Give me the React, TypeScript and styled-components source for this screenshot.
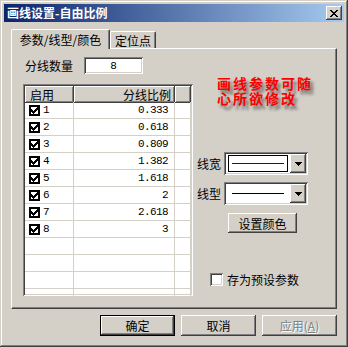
import React from "react";
import styled, { createGlobalStyle } from "styled-components";

const GlobalStyle = createGlobalStyle`
  html, body { margin: 0; padding: 0; background: #d4d0c8; }
  body {
    font-family: "Noto Sans CJK SC", "Liberation Sans", sans-serif;
    font-size: 12px;
    color: #000;
  }
`;

const raised = `
  background: #d4d0c8;
  box-shadow: inset -1px -1px #404040, inset 1px 1px #ffffff, inset -2px -2px #808080, inset 2px 2px #d4d0c8;
`;

const sunken = `
  box-shadow: inset 1px 1px #808080, inset -1px -1px #ffffff, inset 2px 2px #404040, inset -2px -2px #d4d0c8;
`;

const Window = styled.div`
  width: 348px;
  height: 347px;
  box-sizing: border-box;
  padding: 4px;
  background: #d4d0c8;
  box-shadow: inset -1px -1px #404040, inset 1px 1px #d4d0c8, inset -2px -2px #808080, inset 2px 2px #ffffff;
  display: flex;
  flex-direction: column;
`;

const TitleBar = styled.div`
  height: 18px;
  flex-shrink: 0;
  display: flex;
  align-items: center;
  justify-content: space-between;
  padding: 0 2px 0 3px;
  background: linear-gradient(to right, #0a246a, #a6caf0);
`;

const Title = styled.span`
  color: #fff;
  font-weight: bold;
  font-size: 12px;
  line-height: 18px;
`;

const CloseBtn = styled.div`
  ${raised}
  width: 16px;
  height: 14px;
  display: flex;
  align-items: center;
  justify-content: center;
`;

const Body = styled.div`
  flex: 1;
  display: flex;
  flex-direction: column;
  padding: 9px 7px 7px 7px;
`;

const TabRow = styled.div`
  height: 17px;
  display: flex;
  align-items: flex-end;
  position: relative;
  z-index: 1;
`;

const Tab = styled.div<{ $active?: boolean; $w: number }>`
  width: ${(p) => p.$w}px;
  height: ${(p) => (p.$active ? 20 : 17)}px;
  margin-bottom: ${(p) => (p.$active ? -1 : 0)}px;
  box-sizing: border-box;
  background: #d4d0c8;
  border-top: 1px solid #fff;
  border-left: 1px solid #fff;
  border-right: 1px solid #404040;
  border-radius: 2px 2px 0 0;
  box-shadow: inset -1px 0 #808080;
  display: flex;
  align-items: center;
  justify-content: center;
  font-size: 12px;
`;

const Panel = styled.div`
  height: 261px;
  box-sizing: border-box;
  border-top: 1px solid #fff;
  border-left: 1px solid #fff;
  border-right: 1px solid #404040;
  border-bottom: 1px solid #404040;
  box-shadow: inset -1px -1px #808080;
  padding: 8px 0 0 11px;
  display: flex;
`;

const LeftCol = styled.div`
  width: 170px;
  display: flex;
  flex-direction: column;
`;

const CountRow = styled.div`
  height: 17px;
  display: flex;
  align-items: center;
  padding-left: 2px;
`;

const Label = styled.span`
  font-size: 12px;
  white-space: nowrap;
`;

const CountInput = styled.div`
  ${sunken}
  background: #fff;
  width: 59px;
  height: 17px;
  margin-left: 11px;
  display: flex;
  align-items: center;
  justify-content: center;
  font-family: "Liberation Mono", monospace;
  font-size: 11px;
`;

const List = styled.div`
  ${sunken}
  background: #fff;
  margin-top: 10px;
  width: 170px;
  height: 212px;
  box-sizing: border-box;
  padding: 2px;
  overflow: hidden;
`;

const Grid = styled.div<{ $h: number }>`
  display: grid;
  grid-template-columns: 49px 101px 16px;
  height: ${(p) => p.$h}px;
`;

const HeadCell = styled.div<{ $right?: boolean }>`
  ${raised}
  display: flex;
  align-items: center;
  justify-content: ${(p) => (p.$right ? "flex-end" : "flex-start")};
  padding: ${(p) => (p.$right ? "0 4px 0 0" : "0 0 0 5px")};
  font-size: 12px;
`;

const Cell = styled.div<{ $right?: boolean }>`
  box-sizing: border-box;
  border-right: 1px solid #d4d0c8;
  border-bottom: 1px solid #d4d0c8;
  display: flex;
  align-items: center;
  justify-content: ${(p) => (p.$right ? "flex-end" : "flex-start")};
  padding: ${(p) => (p.$right ? "0 6px 0 0" : "0 0 0 4px")};
  font-family: "Liberation Mono", monospace;
  font-size: 11px;
  letter-spacing: -0.6px;
`;

const RowNum = styled.span`
  margin-left: 3px;
`;

const RightCol = styled.div`
  flex: 1;
  display: flex;
  flex-direction: column;
  padding-left: 4px;
`;

const Note = styled.div`
  margin-top: 19px;
  padding-left: 20px;
  color: #ff0000;
  font-weight: bold;
  font-size: 14px;
  line-height: 15px;
  letter-spacing: 2px;
  text-shadow: 3px 4px 3px rgba(0, 0, 0, 0.45);
`;

const FieldRow = styled.div<{ $top: number }>`
  margin-top: ${(p) => p.$top}px;
  height: 23px;
  display: flex;
  align-items: center;
`;

const Combo = styled.div`
  ${sunken}
  background: #fff;
  margin-left: 3px;
  width: 84px;
  height: 23px;
  box-sizing: border-box;
  padding: 2px;
  display: flex;
`;

const FieldArea = styled.div`
  flex: 1;
  padding: 1px 2px;
  display: flex;
`;

const FieldBox = styled.div<{ $boxed?: boolean }>`
  flex: 1;
  border: 1px solid ${(p) => (p.$boxed ? "#000" : "transparent")};
  display: flex;
  align-items: center;
  padding: 0 3px;
`;

const Stroke = styled.div<{ $color: string }>`
  flex: 1;
  height: 1px;
  background: ${(p) => p.$color};
`;

const DropBtn = styled.div`
  ${raised}
  width: 16px;
  height: 19px;
  display: flex;
  align-items: center;
  justify-content: center;
`;

const Button = styled.div<{ $w: number; $default?: boolean; $disabled?: boolean }>`
  ${raised}
  width: ${(p) => p.$w}px;
  box-sizing: border-box;
  display: flex;
  align-items: center;
  justify-content: center;
  font-size: 12px;
  border: ${(p) => (p.$default ? "1px solid #000" : "none")};
  color: ${(p) => (p.$disabled ? "#808080" : "#000")};
  text-shadow: ${(p) => (p.$disabled ? "1px 1px #fff" : "none")};
`;

const ColorButton = styled(Button)`
  margin-top: 8px;
  margin-left: 31px;
  height: 20px;
`;

const CheckRow = styled.div`
  margin-top: 38px;
  margin-left: 13px;
  display: flex;
  align-items: center;
  gap: 4px;
`;

const CheckBox = styled.div`
  ${sunken}
  background: #fff;
  width: 13px;
  height: 13px;
`;

const ButtonRow = styled.div`
  margin-top: 6px;
  height: 21px;
  display: flex;
  justify-content: flex-end;
  gap: 6px;
`;

const DialogButton = styled(Button)`
  height: 21px;
`;

const CloseGlyph = () => (
  <svg width="8" height="7" viewBox="0 0 8 7" shapeRendering="crispEdges">
    <path
      d="M0 0h2v1h-2zM6 0h2v1h-2zM1 1h2v1h-2zM5 1h2v1h-2zM2 2h4v1h-4zM3 3h2v1h-2zM2 4h4v1h-4zM1 5h2v1h-2zM5 5h2v1h-2zM0 6h2v1h-2zM6 6h2v1h-2z"
      fill="#000"
    />
  </svg>
);

const Arrow = () => (
  <svg width="7" height="4" viewBox="0 0 7 4" shapeRendering="crispEdges">
    <path d="M0 0h7v1h-7zM1 1h5v1h-5zM2 2h3v1h-3zM3 3h1v1h-1z" fill="#000" />
  </svg>
);

const Checked = () => (
  <svg width="11" height="11" viewBox="0 0 11 11" shapeRendering="crispEdges">
    <rect x="0" y="0" width="11" height="11" fill="#000" />
    <rect x="2" y="2" width="7" height="7" fill="#fff" />
    <path
      d="M8 2h1v1h-1zM7 3h2v1h-2zM2 4h1v1h-1zM6 4h3v1h-3zM2 5h2v1h-2zM5 5h3v1h-3zM2 6h5v1h-5zM3 7h3v1h-3zM4 8h1v1h-1z"
      fill="#000"
    />
  </svg>
);

const ratios = ["0.333", "0.618", "0.809", "1.382", "1.618", "2", "2.618", "3"];

export default function App() {
  const emptyRows = 4;
  return (
    <>
      <GlobalStyle />
      <Window>
        <TitleBar>
          <Title>画线设置-自由比例</Title>
          <CloseBtn>
            <CloseGlyph />
          </CloseBtn>
        </TitleBar>
        <Body>
          <TabRow>
            <Tab $active $w={99}>参数/线型/颜色</Tab>
            <Tab $w={46}>定位点</Tab>
          </TabRow>
          <Panel>
            <LeftCol>
              <CountRow>
                <Label>分线数量</Label>
                <CountInput>8</CountInput>
              </CountRow>
              <List>
                <Grid $h={16}>
                  <HeadCell>启用</HeadCell>
                  <HeadCell $right>分线比例</HeadCell>
                  <HeadCell />
                </Grid>
                {ratios.map((r, i) => (
                  <Grid $h={17} key={i}>
                    <Cell>
                      <Checked />
                      <RowNum>{i + 1}</RowNum>
                    </Cell>
                    <Cell $right>{r}</Cell>
                    <Cell />
                  </Grid>
                ))}
                {Array.from({ length: emptyRows }).map((_, i) => (
                  <Grid $h={17} key={"e" + i}>
                    <Cell />
                    <Cell />
                    <Cell />
                  </Grid>
                ))}
              </List>
            </LeftCol>
            <RightCol>
              <Note>
                画线参数可随
                <br />
                心所欲修改
              </Note>
              <FieldRow $top={46}>
                <Label>线宽</Label>
                <Combo>
                  <FieldArea>
                    <FieldBox $boxed>
                      <Stroke $color="#0000ff" />
                    </FieldBox>
                  </FieldArea>
                  <DropBtn>
                    <Arrow />
                  </DropBtn>
                </Combo>
              </FieldRow>
              <FieldRow $top={7}>
                <Label>线型</Label>
                <Combo>
                  <FieldArea>
                    <FieldBox>
                      <Stroke $color="#000" />
                    </FieldBox>
                  </FieldArea>
                  <DropBtn>
                    <Arrow />
                  </DropBtn>
                </Combo>
              </FieldRow>
              <ColorButton $w={69}>设置颜色</ColorButton>
              <CheckRow>
                <CheckBox />
                <Label>存为预设参数</Label>
              </CheckRow>
            </RightCol>
          </Panel>
          <ButtonRow>
            <DialogButton $w={75} $default>确定</DialogButton>
            <DialogButton $w={75}>取消</DialogButton>
            <DialogButton $w={75} $disabled>
              应用(<u>A</u>)
            </DialogButton>
          </ButtonRow>
        </Body>
      </Window>
    </>
  );
}
